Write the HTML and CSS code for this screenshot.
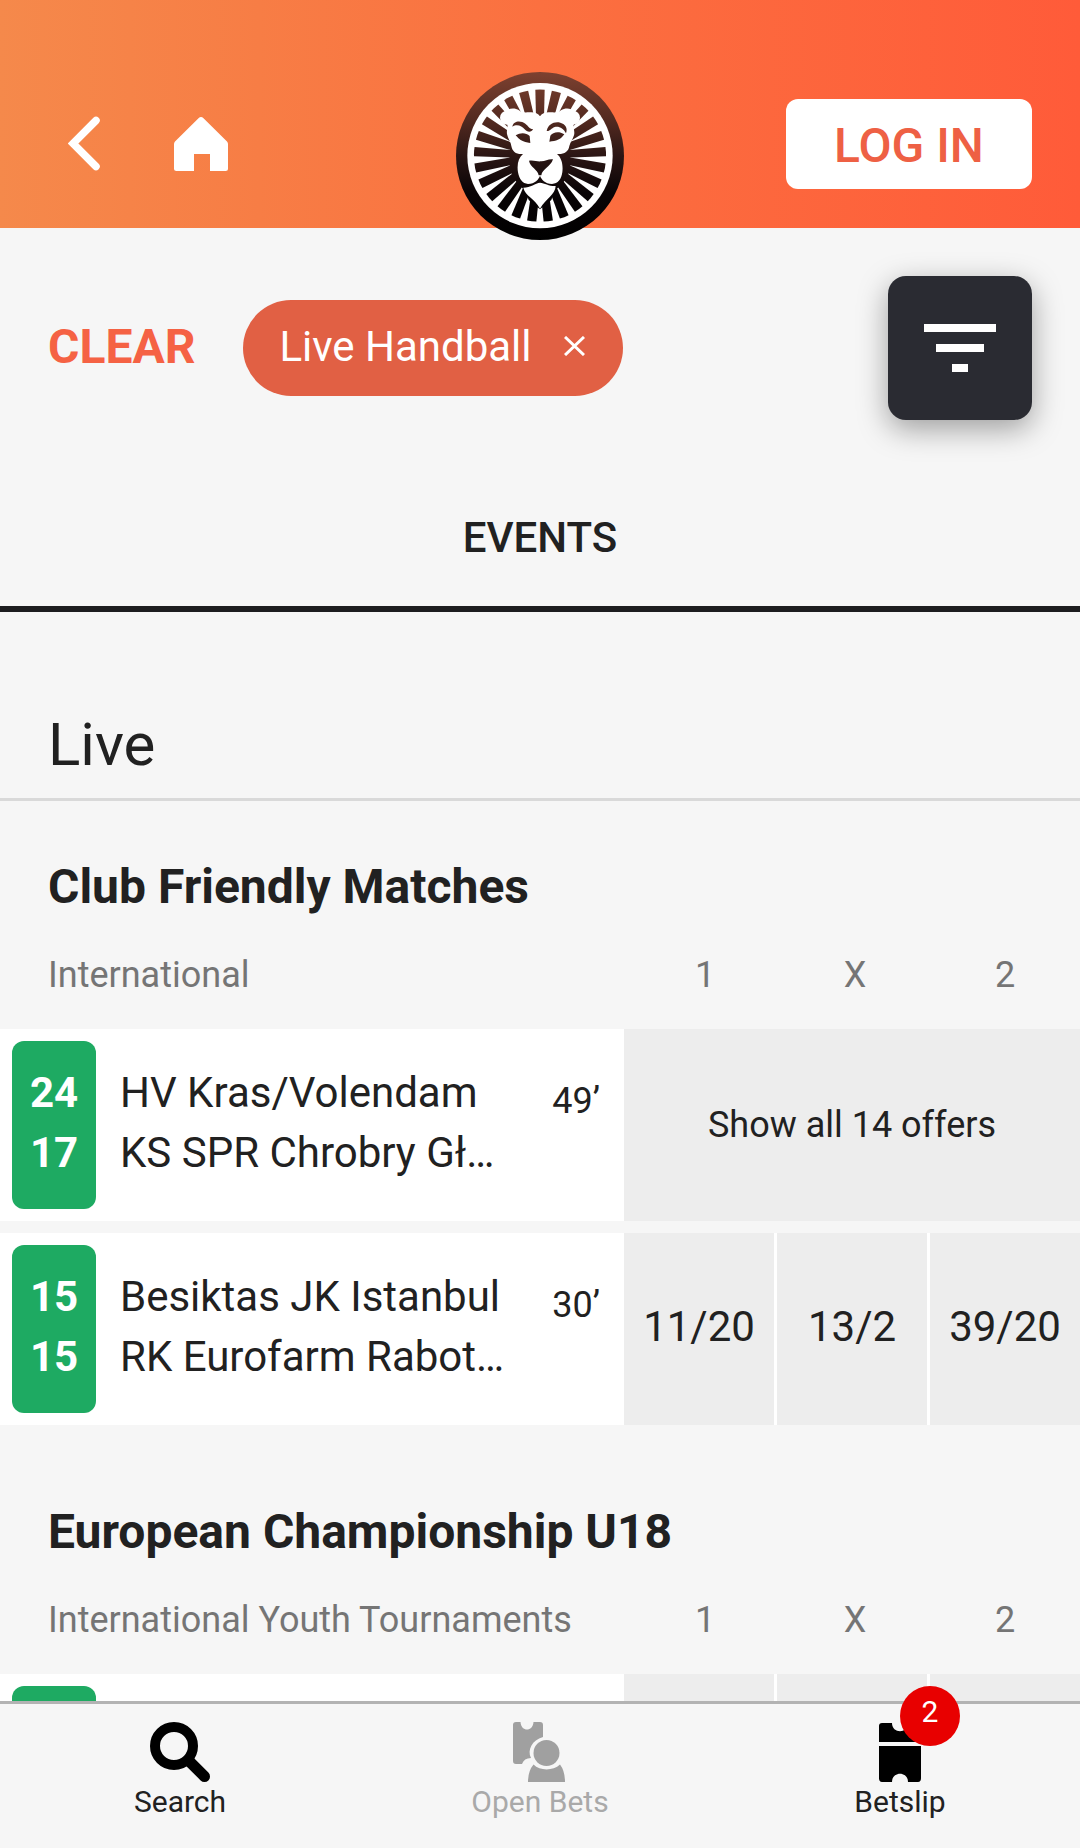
FILE: index.html
```html
<!DOCTYPE html>
<html lang="en">
<head>
<meta charset="utf-8">
<meta name="viewport" content="width=device-width, initial-scale=1">
<title>Live Handball</title>
<link rel="stylesheet" href="styles.css">
</head>
<body>
<div class="app">
  <header class="topbar">
    <div class="topbar-side">
      <button class="icon-btn back" aria-label="Back">
        <svg width="33" height="56" viewBox="0 0 33 56"><path d="M28 4.500L5 27.500L28 50.500" fill="none" stroke="#fff" stroke-width="7.500" stroke-linecap="round" stroke-linejoin="miter"/></svg>
      </button>
      <a class="icon-btn" href="#home" aria-label="Home">
        <svg width="54" height="54" viewBox="0 0 54 54"><path fill="#fff" d="M24.500 1.200Q27 -1 29.500 1.200L53 24.500Q54 25.500 54 27V51.500Q54 54 51.500 54H36V37H20V54H2.500Q0 54 0 51.500V27Q0 25.500 1 24.500Z"/></svg>
      </a>
    </div>
    <a class="logo" href="#top" aria-label="Lion logo">
      <svg width="168" height="168" viewBox="48 36 504 504">
        <defs>
          <linearGradient id="dark" gradientUnits="userSpaceOnUse" x1="0" y1="36" x2="0" y2="540">
            <stop offset="0" stop-color="#7d4130"/>
            <stop offset=".28" stop-color="#542a20"/>
            <stop offset=".5" stop-color="#2b1614"/>
            <stop offset=".72" stop-color="#090406"/>
            <stop offset="1" stop-color="#000"/>
          </linearGradient>
          <mask id="mane" maskUnits="userSpaceOnUse" x="48" y="36" width="504" height="504">
            <g fill="#fff">
              <ellipse cx="300" cy="304" rx="92" ry="98"/>
              <g id="rays">
                <path id="ray" d="M286 89.500Q300 88 314 89.500L311 215H289Z"/>
                <use href="#ray" transform="rotate(14.400 300 287)"/><use href="#ray" transform="rotate(28.800 300 287)"/>
                <use href="#ray" transform="rotate(43.200 300 287)"/><use href="#ray" transform="rotate(57.600 300 287)"/>
                <use href="#ray" transform="rotate(72 300 287)"/><use href="#ray" transform="rotate(86.400 300 287)"/>
                <use href="#ray" transform="rotate(100.800 300 287)"/><use href="#ray" transform="rotate(115.200 300 287)"/>
                <use href="#ray" transform="rotate(129.600 300 287)"/><use href="#ray" transform="rotate(144 300 287)"/>
                <use href="#ray" transform="rotate(158.400 300 287)"/><use href="#ray" transform="rotate(172.800 300 287)"/>
                <use href="#ray" transform="rotate(187.200 300 287)"/><use href="#ray" transform="rotate(201.600 300 287)"/>
                <use href="#ray" transform="rotate(216 300 287)"/><use href="#ray" transform="rotate(230.400 300 287)"/>
                <use href="#ray" transform="rotate(244.800 300 287)"/><use href="#ray" transform="rotate(259.200 300 287)"/>
                <use href="#ray" transform="rotate(273.600 300 287)"/><use href="#ray" transform="rotate(288 300 287)"/>
                <use href="#ray" transform="rotate(302.400 300 287)"/><use href="#ray" transform="rotate(316.800 300 287)"/>
                <use href="#ray" transform="rotate(331.200 300 287)"/><use href="#ray" transform="rotate(345.600 300 287)"/>
              </g>
              <path d="M250 375L266 420L300 448L334 420L350 375Z"/>
            </g>
            <g fill="#000">
              <circle cx="201" cy="173" r="21"/>
              <circle cx="399" cy="173" r="21"/>
              <path d="M300 169C294 158 280 155 266 157C252 158 243 157 237 151C218 138 191 148 184 174L200 190C207 199 197 211 202 226C206 240 212 246 214 258C217 275 229 284 249 282C236 293 230 312 234 337C238 358 248 371 264 372C285 371 296 358 300 347C304 358 315 371 336 372C354 371 364 358 367 337C370 312 364 293 351 282C371 284 386 275 388 258C391 246 398 240 402 226C406 211 396 199 403 190L418 174C410 148 382 138 363 151C356 157 348 158 334 157C320 155 306 158 300 169Z"/>
              <path d="M250 383C272 383 286 369 300 368C314 369 328 379 347 378C346 405 318 414 300 446C284 414 256 409 250 383Z"/>
            </g>
            <g fill="#fff">
              <path d="M217 200C221 181 243 182 256 191C266 198 267 207 279 207C275 218 262 218 254 208C246 198 231 190 217 200Z"/>
              <path d="M320 213C325 192 342 184 361 188C377 192 384 205 378 220C371 204 355 197 344 201C333 205 331 214 320 213Z"/>
              <path d="M227 226C241 217 258 217 269 228L271 249C248 246 238 238 232 231Z"/>
              <path d="M373 223C357 213 339 216 331 227L328 245C349 244 362 237 368 229Z"/>
              <path d="M267 302C282 300 291 305 302 304C315 305 325 296 339 298C332 321 306 327 304 346H296C294 328 270 322 267 302Z"/>
            </g>
          </mask>
        </defs>
        <circle cx="300" cy="288" r="252" fill="url(#dark)"/>
        <circle cx="300" cy="287" r="218" fill="#fff"/>
        <rect x="48" y="36" width="504" height="504" fill="url(#dark)" mask="url(#mane)"/>
      </svg>
    </a>
    <div class="topbar-side topbar-end">
      <button class="login">LOG IN</button>
    </div>
  </header>

  <main class="content">
    <div class="filters">
      <button class="clear">CLEAR</button>
      <button class="chip">Live Handball
        <svg width="21" height="20" viewBox="0 0 21 20"><path d="M1 1L20 19M20 1L1 19" stroke="#fff" stroke-width="3" fill="none"/></svg>
      </button>
      <button class="filter" aria-label="Filter">
        <svg width="72" height="48" viewBox="0 0 72 48"><path fill="#fff" d="M0 0H72V8H0ZM12 20H60V28H12ZM28 40H44V48H28Z"/></svg>
      </button>
    </div>

    <nav class="tabs"><a class="tab" href="#events" aria-current="page">EVENTS</a></nav>

    <h1 class="section-title">Live</h1>

    <section class="league">
      <h2 class="league-name">Club Friendly Matches</h2>
      <div class="league-head">
        <span class="region">International</span>
        <span class="cols"><span>1</span><span>X</span><span>2</span></span>
      </div>
      <article class="match">
        <div class="score"><span>24</span><span>17</span></div>
        <div class="teams"><span>HV Kras/Volendam</span><span>KS SPR Chrobry Gł…</span></div>
        <time class="clock">49’</time>
        <div class="odds"><button class="all-offers">Show all 14 offers</button></div>
      </article>
      <article class="match">
        <div class="score"><span>15</span><span>15</span></div>
        <div class="teams"><span>Besiktas JK Istanbul</span><span>RK Eurofarm Rabot…</span></div>
        <time class="clock">30’</time>
        <div class="odds"><button class="odd">11/20</button><button class="odd">13/2</button><button class="odd">39/20</button></div>
      </article>
    </section>

    <section class="league">
      <h2 class="league-name">European Championship U18</h2>
      <div class="league-head">
        <span class="region">International Youth Tournaments</span>
        <span class="cols"><span>1</span><span>X</span><span>2</span></span>
      </div>
      <article class="match">
        <div class="score"></div>
        <div class="teams"></div>
        <time class="clock"></time>
        <div class="odds"><button class="odd"></button><button class="odd"></button><button class="odd"></button></div>
      </article>
    </section>
  </main>

  <nav class="bottombar">
    <a class="nav-item" href="#search">
      <svg width="60" height="60" viewBox="0 0 60 60"><circle cx="24" cy="24" r="19" fill="none" stroke="#000" stroke-width="10"/><path d="M39 39L54.500 54.500" stroke="#000" stroke-width="11" stroke-linecap="round"/></svg>
      Search
    </a>
    <a class="nav-item muted" href="#open-bets">
      <svg width="60" height="60" viewBox="0 0 60 60"><path d="M3 3Q3 0 6 0H10.500C11 10 23 10 23.500 0H30Q33 0 33 3V15C22 18 17 28 21 36Q14 36 12 42H6Q3 42 3 39Z"/><ellipse cx="36.500" cy="31" rx="13" ry="13"/><path d="M23.500 42.500C30 49 43 49 50 42.500Q55 49 55 60H18Q18 49 23.500 42.500Z"/></svg>
      Open Bets
    </a>
    <a class="nav-item" href="#betslip">
      <span class="nav-icon">
        <svg width="60" height="60" viewBox="0 0 60 60"><path d="M9 4Q9 1 12 1H22C22 12 38 12 38 1H48Q51 1 51 4V20H9ZM9 24H51V56Q51 60 48 60H38C38 49 22 49 22 60H12Q9 60 9 56Z"/></svg>
        <span class="badge">2</span>
      </span>
      Betslip
    </a>
  </nav>
</div>
</body>
</html>
```
FILE: styles.css
```css
* {
  box-sizing: border-box;
}

body {
  margin: 0;
  background: #f6f6f6;
  color: #212121;
  font-family: Roboto, "Noto Sans", sans-serif;
}

button {
  border: 0;
  padding: 0;
  background: none;
  color: inherit;
  font: inherit;
  cursor: pointer;
}

a {
  color: inherit;
  text-decoration: none;
}

svg {
  display: block;
}

.app {
  display: flex;
  flex-direction: column;
  height: 100vh;
}

/* Top bar */
.topbar {
  display: grid;
  grid-template-columns: 1fr auto 1fr;
  padding: 60px 48px 0;
  background: linear-gradient(90deg, #f5894b, #f77d45 24%, #fb7040 50%, #ff5b39);
  position: relative;
  z-index: 1;
}

.topbar-side {
  display: flex;
  align-items: center;
  height: 168px;
  gap: 73px;
  padding-left: 20px;
}

.topbar-end {
  justify-content: flex-end;
  padding-left: 0;
}

.logo {
  margin: 12px 0 -12px;
}

.login {
  width: 246px;
  height: 90px;
  padding-top: 2px;
  border-radius: 12px;
  background: #fff;
  color: #ee6044;
  font-size: 48px;
  font-weight: 500;
}

/* Filters */
.content {
  flex: 1;
  min-height: 0;
  overflow-y: auto;
  scrollbar-width: none;
}

.filters {
  display: flex;
  align-items: center;
  padding: 48px;
}

.clear {
  margin-right: 48px;
  padding-bottom: 4px;
  color: #f56244;
  font-size: 48px;
  font-weight: 700;
}

.chip {
  display: flex;
  align-items: center;
  gap: 32px;
  height: 96px;
  padding: 0 38px 4px 36px;
  border-radius: 48px;
  background: #e16044;
  color: #fff;
  font-size: 42px;
}

.filter {
  display: grid;
  place-items: center;
  width: 144px;
  height: 144px;
  margin-left: auto;
  border-radius: 18px;
  background: #2a2b32;
  box-shadow: 0 9px 30px rgba(0, 0, 0, .36);
}

.tabs {
  display: flex;
  border-bottom: 6px solid #1d1d1f;
}

.tab {
  flex: 1;
  padding: 46px 0 44px;
  font-size: 42px;
  font-weight: 500;
  line-height: 48px;
  text-align: center;
}

.section-title {
  margin: 0;
  padding: 97px 48px 17px;
  border-bottom: 3px solid #d9d9d9;
  font-size: 60px;
  font-weight: 400;
  line-height: 72px;
}

/* Leagues */
.league {
  padding-bottom: 9px;
}

.league-name {
  margin: 0;
  padding: 53px 48px 31px;
  font-size: 48px;
  font-weight: 700;
  line-height: 66px;
}

.league-head {
  display: flex;
  align-items: center;
  justify-content: space-between;
  padding: 0 0 30px 48px;
  color: #757575;
  font-size: 36px;
  line-height: 48px;
}

.cols {
  display: grid;
  grid-template-columns: repeat(3, 150px);
  text-align: center;
}

.match {
  display: grid;
  grid-template-columns: 84px 1fr auto 456px;
  margin-bottom: 12px;
  padding-left: 12px;
  background: #fff;
}

.score {
  display: flex;
  flex-direction: column;
  justify-content: center;
  height: 168px;
  margin: 12px 0;
  padding-bottom: 4px;
  border-radius: 12px;
  background: #1eaa62;
  color: #fff;
  font-size: 42px;
  font-weight: 700;
  line-height: 60px;
  text-align: center;
}

.teams {
  display: flex;
  flex-direction: column;
  justify-content: center;
  min-width: 0;
  padding: 0 48px 4px 24px;
  font-size: 42px;
  line-height: 60px;
}

.teams span {
  overflow: hidden;
  text-overflow: ellipsis;
  white-space: nowrap;
}

.clock {
  padding: 48px 24px 0 0;
  font-size: 36px;
  line-height: 48px;
}

.odds {
  display: flex;
  gap: 3px;
}

.odd,
.all-offers {
  flex: 1;
  background: #ededed;
}

.odd {
  padding-bottom: 6px;
  font-size: 42px;
}

.all-offers {
  font-size: 36px;
}

/* Bottom bar */
.bottombar {
  display: grid;
  grid-template-columns: repeat(3, 1fr);
  border-top: 3px solid #b3b3b3;
  background: #f6f6f6;
  position: relative;
}

.nav-item {
  display: flex;
  flex-direction: column;
  align-items: center;
  gap: 2px;
  padding: 18px 0 28px;
  font-size: 30px;
  line-height: 36px;
}

.muted {
  color: #a9a9a9;
}

.muted svg {
  fill: #a0a0a0;
}

.nav-icon {
  position: relative;
}

.badge {
  position: absolute;
  left: 30px;
  bottom: 36px;
  width: 60px;
  height: 60px;
  border-radius: 50%;
  background: #e80000;
  color: #fff;
  line-height: 52px;
  text-align: center;
}
```
